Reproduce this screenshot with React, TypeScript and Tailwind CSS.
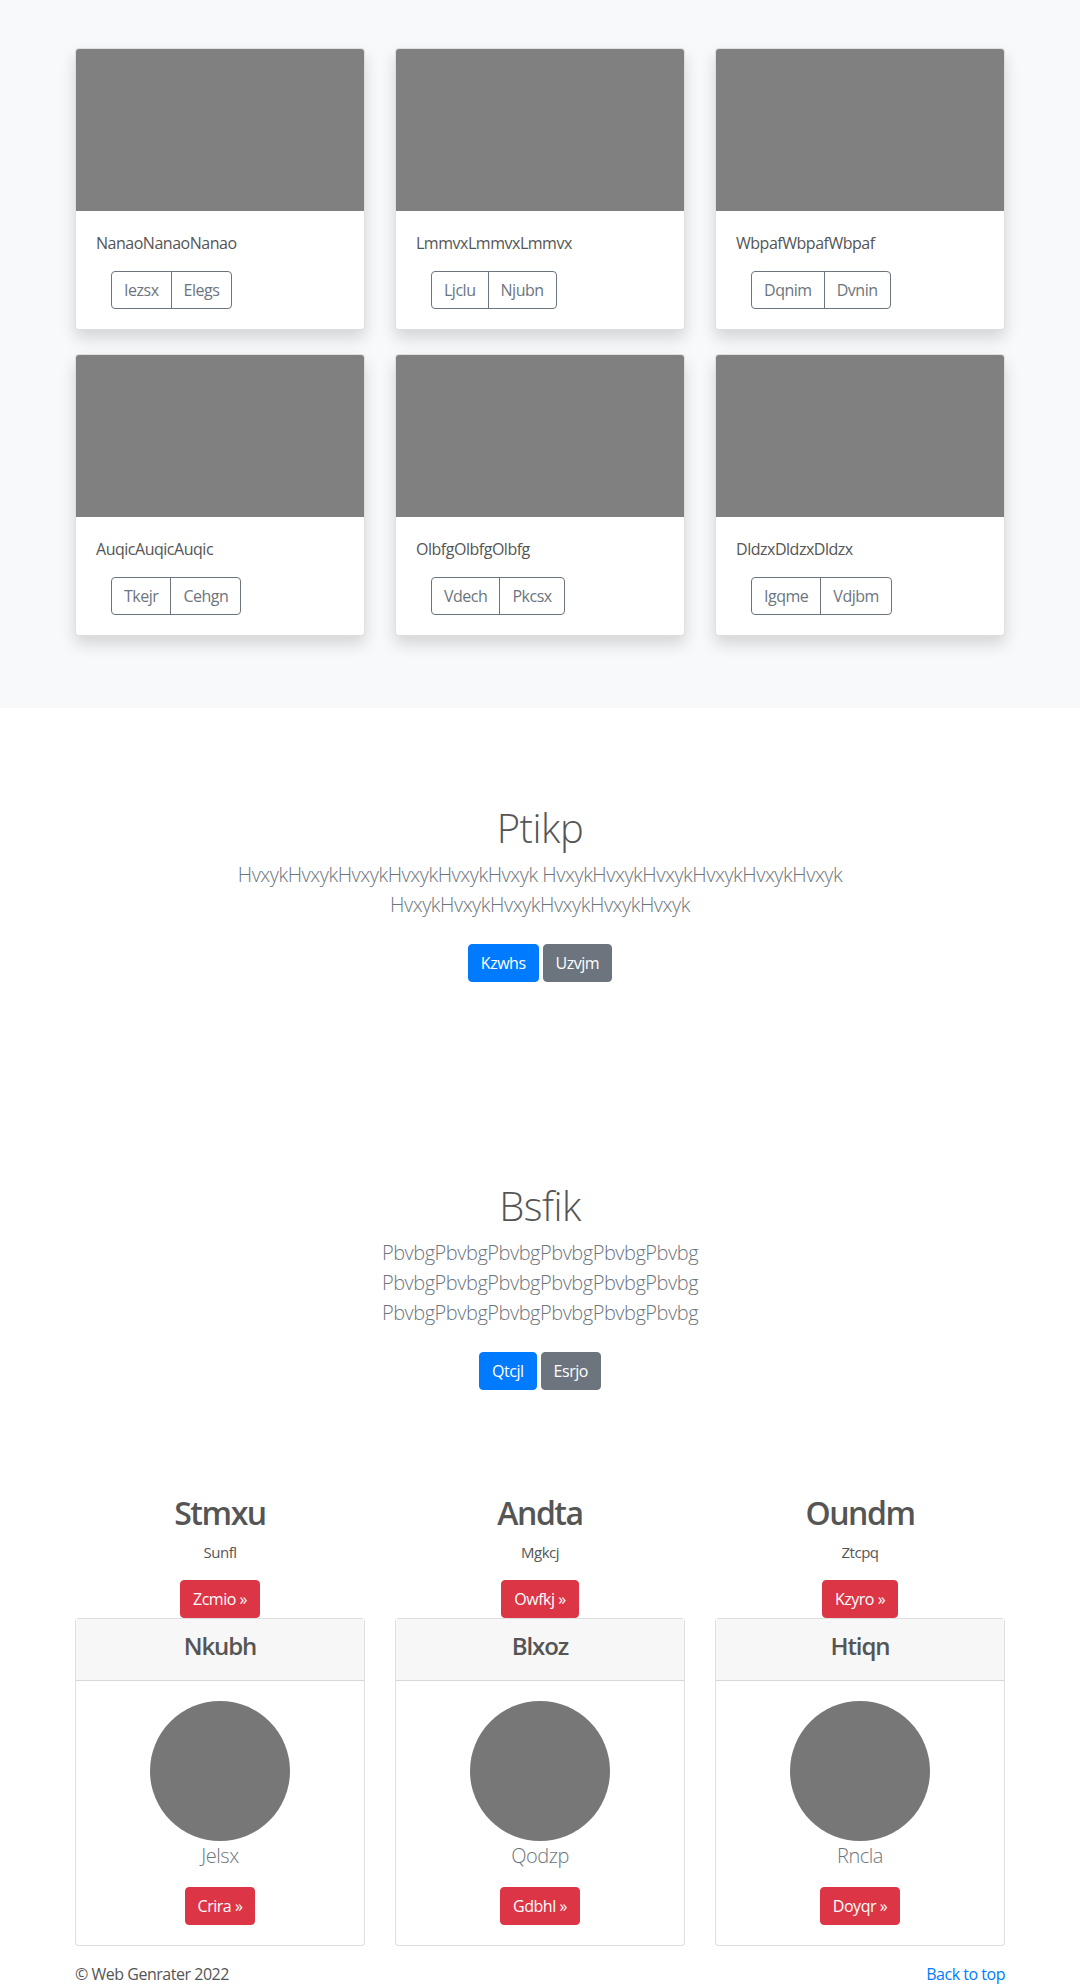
import React from "react";

const albumCards = [
  { title: "NanaoNanaoNanao", a: "Iezsx", b: "Elegs" },
  { title: "LmmvxLmmvxLmmvx", a: "Ljclu", b: "Njubn" },
  { title: "WbpafWbpafWbpaf", a: "Dqnim", b: "Dvnin" },
  { title: "AuqicAuqicAuqic", a: "Tkejr", b: "Cehgn" },
  { title: "OlbfgOlbfgOlbfg", a: "Vdech", b: "Pkcsx" },
  { title: "DldzxDldzxDldzx", a: "Igqme", b: "Vdjbm" },
];

const marketing = [
  { h: "Stmxu", p: "Sunfl", btn: "Zcmio", card: "Nkubh", name: "Jelsx", cbtn: "Crira" },
  { h: "Andta", p: "Mgkcj", btn: "Owfkj", card: "Blxoz", name: "Qodzp", cbtn: "Gdbhl" },
  { h: "Oundm", p: "Ztcpq", btn: "Kzyro", card: "Htiqn", name: "Rncla", cbtn: "Doyqr" },
];

function AlbumCard({ title, a, b }: { title: string; a: string; b: string }) {
  return (
    <div className="mb-6 flex flex-col overflow-hidden rounded-[4px] border border-[rgba(0,0,0,0.125)] bg-white shadow-[0_8px_16px_rgba(0,0,0,0.15)]">
      <div className="h-[162px] bg-[#808080]" />
      <div className="p-5">
        <p className="mb-4 text-[16px] leading-6 text-[#555]">{title}</p>
        <div className="ml-[15px] flex">
          <span className="rounded-l-[4px] border border-[#6c757d] px-3 py-1.5 text-[16px] leading-6 text-[#6c757d]">
            {a}
          </span>
          <span className="-ml-px rounded-r-[4px] border border-[#6c757d] px-3 py-1.5 text-[16px] leading-6 text-[#6c757d]">
            {b}
          </span>
        </div>
      </div>
    </div>
  );
}

function Jumbo({ title, lead, b1, b2 }: { title: string; lead: string; b1: string; b2: string }) {
  return (
    <section className="bg-white py-24 text-center">
      <div className="mx-auto max-w-[660px] px-[15px]">
        <h1 className="mb-2 text-[40px] font-light leading-[48px] text-[#555]">{title}</h1>
        <p className="mb-4 text-[20px] font-light leading-[30px] text-[#6c757d]">{lead}</p>
        <div className="flex justify-center gap-1 py-2">
          <span className="rounded-[4px] border border-[#007bff] bg-[#007bff] px-3 py-1.5 text-[16px] leading-6 text-white">
            {b1}
          </span>
          <span className="rounded-[4px] border border-[#6c757d] bg-[#6c757d] px-3 py-1.5 text-[16px] leading-6 text-white">
            {b2}
          </span>
        </div>
      </div>
    </section>
  );
}

function RedBtn({ children }: { children: React.ReactNode }) {
  return (
    <span className="inline-block rounded-[4px] border border-[#dc3545] bg-[#dc3545] px-3 py-1.5 text-[16px] leading-6 text-white">
      {children}
    </span>
  );
}

export default function App() {
  return (
    <div
      className="bg-white text-[16px] leading-6 tracking-[-0.03em] text-[#555]"
      style={{ fontFamily: '"Open Sans", "Noto Sans", "Liberation Sans", sans-serif' }}
    >
      <div className="bg-[#f8f9fa] py-12">
        <div className="mx-auto w-[960px] px-[15px]">
          <div className="grid grid-cols-3 gap-x-[30px]">
            {albumCards.map((c) => (
              <AlbumCard key={c.title} {...c} />
            ))}
          </div>
        </div>
      </div>

      <Jumbo
        title="Ptikp"
        lead="HvxykHvxykHvxykHvxykHvxykHvxyk HvxykHvxykHvxykHvxykHvxykHvxyk HvxykHvxykHvxykHvxykHvxykHvxyk"
        b1="Kzwhs"
        b2="Uzvjm"
      />
      <Jumbo
        title="Bsfik"
        lead="PbvbgPbvbgPbvbgPbvbgPbvbgPbvbg PbvbgPbvbgPbvbgPbvbgPbvbgPbvbg PbvbgPbvbgPbvbgPbvbgPbvbgPbvbg"
        b1="Qtcjl"
        b2="Esrjo"
      />

      <div className="mx-auto w-[960px] px-[15px]">
        <div className="grid grid-cols-3 gap-x-[30px]">
          {marketing.map((m) => (
            <div key={m.h} className="flex flex-col text-center">
              <h2 className="mb-2 text-[32px] font-semibold leading-[38px] tracking-[-0.045em] text-[#555]">{m.h}</h2>
              <p className="mb-4 text-[15px] leading-6 text-[#555]">{m.p}</p>
              <div>
                <RedBtn>{m.btn} »</RedBtn>
              </div>
              <div className="rounded-[4px] border border-[rgba(0,0,0,0.125)] bg-white">
                <div className="border-b border-[rgba(0,0,0,0.125)] bg-[#f7f7f7] px-5 py-3">
                  <h4 className="mb-2 text-[24px] font-semibold leading-[29px] tracking-[-0.045em] text-[#555]">{m.card}</h4>
                </div>
                <div className="p-5">
                  <div className="mx-auto h-[140px] w-[140px] rounded-full bg-[#777]" />
                  <p className="mb-4 text-[20px] font-light leading-[30px] text-[#6c757d]">{m.name}</p>
                  <RedBtn>{m.cbtn} »</RedBtn>
                </div>
              </div>
            </div>
          ))}
        </div>
        <footer className="mt-4 flex justify-between text-[16px] leading-6">
          <p className="text-[#555]">© Web Genrater 2022</p>
          <p className="text-[#007bff]">Back to top</p>
        </footer>
      </div>
    </div>
  );
}
